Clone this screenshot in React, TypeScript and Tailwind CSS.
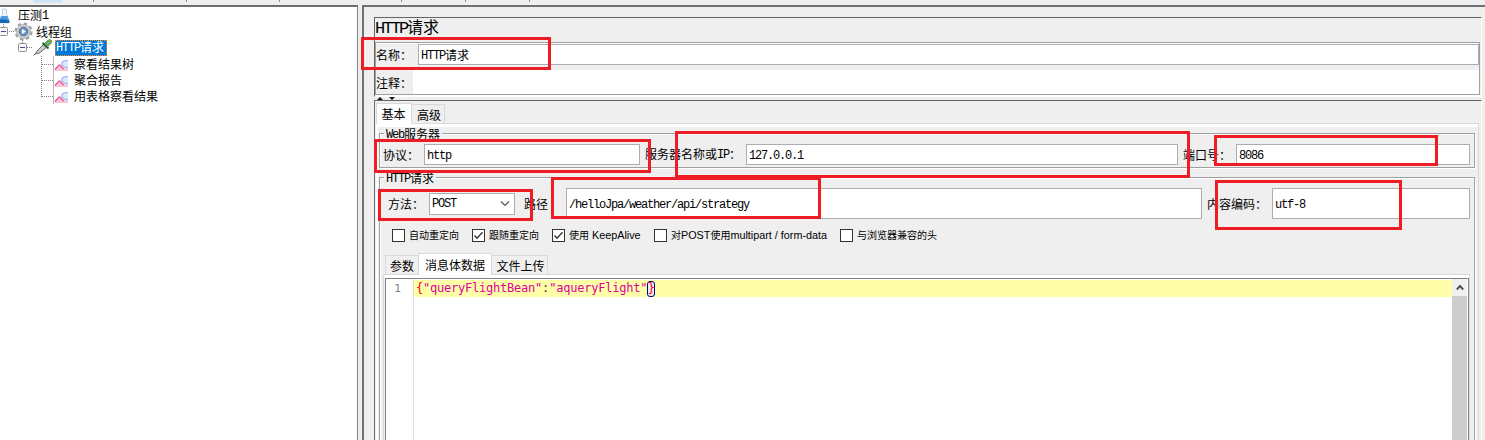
import React from "react";

const LATIN: Record<string, string> = {
  sm: "relative top-[-1px] font-['Liberation_Mono',monospace] text-[12px] tracking-[-1.2px]",
  lg: "font-['Liberation_Mono',monospace] text-[17px] tracking-[-2.2px]",
  ui: "font-['Liberation_Sans',sans-serif] text-[10.8px]",
};

function Mixed({ text, size = "sm" }: { text: string; size?: "sm" | "lg" | "ui" }) {
  const parts = text.match(/[\x20-\x7e]+|[^\x20-\x7e]+/g) ?? [];
  return (
    <span className="whitespace-pre">
      {parts.map((p, i) =>
        /^[\x20-\x7e]/.test(p) ? (
          <span key={i} className={LATIN[size]}>{p}</span>
        ) : (
          <span key={i}>{p}</span>
        )
      )}
    </span>
  );
}

function Field({ text, className }: { text: string; className: string }) {
  return (
    <div className={`flex shrink-0 items-center border border-[#abadb3] bg-white pl-[2px] pt-[2px] ${className}`}>
      <Mixed text={text} />
    </div>
  );
}

function Check({ label, checked, className }: { label: string; checked?: boolean; className: string }) {
  return (
    <div className={`flex shrink-0 items-center ${className}`}>
      <svg width="13" height="13" viewBox="0 0 13 13" className="shrink-0">
        <rect x="0.5" y="0.5" width="12" height="12" fill="#fff" stroke="#333" />
        {checked && <path d="M2.5 6.5 5 9.2 10.5 3.2" fill="none" stroke="#333" strokeWidth="1.3" />}
      </svg>
      <span className="ml-[4px] mt-[-1px] text-[10px]"><Mixed text={label} size="ui" /></span>
    </div>
  );
}

const dots = { stroke: "#808080", strokeDasharray: "1 1", fill: "none" };

function Expander({ x, y }: { x: number; y: number }) {
  return (
    <g>
      <rect x={x + 0.5} y={y + 0.5} width="8" height="8" rx="1" fill="#f8f8f8" stroke="#919191" />
      <path d={`M${x + 2} ${y + 4.5}h5`} stroke="#3c4fa0" />
    </g>
  );
}

function ChartRow({ label, last }: { label: string; last?: boolean }) {
  return (
    <div className="flex h-[16px] items-center">
      <svg width="74" height="16" className="shrink-0 overflow-visible">
        <path d={last ? "M41.5 0V9" : "M41.5 0V16"} {...dots} />
        <path d="M42 8.5H53" {...dots} />
        <path d="M53.5 0V16" stroke="#b9b9bd" />
        <path d="M55 13.5 59.500 9 63 13 68 12V15H55Z" fill="#fbc3d8" />
        <path d="M61.800 8Q61.800 4.500 68 4.500V12Q62 12.500 61.800 8Z" fill="#dbeafd" />
        <path d="M68 4.500Q61.800 4.500 61.800 8Q62 11 68 12" stroke="#8fa9ee" fill="none" strokeWidth="1.100" />
        <path d="M54.800 13.500 59.500 8.800 64 13.200" stroke="#e3568f" fill="none" strokeWidth="1.300" />
      </svg>
      <span>{label}</span>
    </div>
  );
}

function Tree() {
  return (
    <div className="flex h-full w-[358px] shrink-0 flex-col border-r border-t-2 border-r-[#848488] border-t-[#6c6d71] bg-white pt-[1px]">
      <div className="flex h-[16px] items-center">
        <svg width="18" height="16" className="shrink-0 overflow-visible">
          <path d="M2.500 1H6.500V6L9.800 13.500Q9.800 15 8.500 15H-1V11L2.500 6Z" fill="#eef3f8" stroke="#b9c6d2" strokeWidth="0.700" />
          <path d="M1.500 8H7.500L9.600 13.500Q9.600 15 8 15H-1V12Z" fill="#4b9be0" />
          <path d="M0 11.500Q4 10.500 9 12.500L9 15H0Z" fill="#1667b8" />
        </svg>
        <Mixed text="压测1" />
      </div>
      <div className="flex h-[16px] items-center">
        <svg width="36" height="16" className="shrink-0 overflow-visible">
          <path d="M3.500 0V3" {...dots} />
          <path d="M9 7.500H14" {...dots} />
          <Expander x={-1} y={3} />
          <circle cx="23.500" cy="7.500" r="7.700" fill="none" stroke="#a2a5a9" strokeWidth="2.600" strokeDasharray="3.500 2.548" />
          <circle cx="23.500" cy="7.500" r="6.900" fill="#d2d4d7" stroke="#a0a3a7" strokeWidth="0.800" />
          <circle cx="23.500" cy="7.500" r="4.300" fill="#6d97c8" stroke="#4a6387" />
          <path d="M22 5V10L26 7.500Z" fill="#fff" />
        </svg>
        <span>线程组</span>
      </div>
      <div className="flex h-[16px] items-center">
        <svg width="55" height="16" className="shrink-0 overflow-visible">
          <path d="M22.500 0V3M27 7.500H33" {...dots} />
          <Expander x={18} y={3} />
          <path d="M35.500 14 37 11 44.500 3.500 47.500 6.500 39.500 13Z" fill="#c6cccc" stroke="#6b7173" />
          <path d="M33.500 15.500 36 13" stroke="#555" />
          <path d="M42.500 3 48.500 8.500" stroke="#2f5a35" strokeWidth="2" />
          <path d="M44.500 3.500 47.500 0.500Q49.800-1 51.300 0Q52.500 2 50.500 4L47.500 6.500Z" fill="#6cae5e" stroke="#4b8e49" strokeWidth="0.800" />
        </svg>
        <div className="flex h-[16px] w-[52px] items-center border border-dotted border-[#ff8a28] bg-[#0078d7] text-white">
          <Mixed text="HTTP请求" />
        </div>
      </div>
      <ChartRow label="察看结果树" />
      <ChartRow label="聚合报告" />
      <ChartRow label="用表格察看结果" last />
    </div>
  );
}

function Group({ title, className, children }: { title: string; className: string; children: React.ReactNode }) {
  return (
    <div className={`ml-[1px] flex w-[1096px] shrink-0 flex-col border border-[#a0a0a0] shadow-[1px_1px_0_#fff,inset_1px_1px_0_#fff] ${className}`}>
      <div className="ml-[4px] mt-[-6px] flex h-[13px] w-fit shrink-0 items-center bg-[#efefef] px-[2px] pt-[1px]">
        <Mixed text={title} />
      </div>
      {children}
    </div>
  );
}

function Editor() {
  return (
    <div className="ml-[2px] mt-[3px] flex h-[164px] w-[1084px] shrink-0 border border-[#7f818c] bg-white font-['DejaVu_Sans_Mono',monospace] text-[12px] tracking-[-0.22px]">
      <div className="flex w-[28px] shrink-0 justify-center border-r border-[#dddddd] pt-[2px]">
        <span className="h-[16px] pr-[4px] text-[11px] leading-[16px] text-[#808080]">1</span>
      </div>
      <div className="w-[1038px] shrink-0 pt-[1px]">
        <div className="flex h-[17px] items-center bg-[#ffffaa] pl-[2px] leading-[15px]">
          <span className="text-[#ff0000]">{"{"}</span>
          <span className="text-[#dc009c]">"queryFlightBean"</span>
          <span className="text-[#333]">:</span>
          <span className="text-[#dc009c]">"aqueryFlight"</span>
          <span className="flex h-[16px] w-[8px] items-center justify-center rounded-[3px] border border-[#000080] bg-[#eaeaff] text-[#ff0000]">{"}"}</span>
        </div>
      </div>
      <div className="flex w-[15px] shrink-0 flex-col bg-[#cdcdcd]">
        <div className="flex h-[17px] items-center justify-center bg-[#f0f0f0]">
          <svg width="8" height="7"><path d="M0.800 5.500 4 2 7.200 5.500" fill="none" stroke="#505050" strokeWidth="1.900" /></svg>
        </div>
      </div>
    </div>
  );
}

function RequestPanel() {
  return (
    <div className="ml-[4px] flex h-full w-[1123px] shrink-0 flex-col border-l-2 border-t-2 border-[#6f7075] pl-[10px] pt-[10px]">
      <div className="flex h-[80px] w-[1108px] shrink-0 flex-col border-b border-l border-r border-t border-b-white border-l-[#646464] border-r-white border-t-[#646464]">
        <div className="flex h-[24px] shrink-0 items-center text-[16px] leading-[20px]">
          <span className="mt-[-5px]"><Mixed text="HTTP请求" size="lg" /></span>
        </div>
        <div className="flex h-[53px] w-[1105px] shrink-0 flex-col border border-[#a0a0a0]">
          <div className="h-[1px] shrink-0 bg-white" />
          <div className="flex h-[21px] shrink-0 items-center">
            <span className="w-[42px] shrink-0 whitespace-nowrap">名称：</span>
            <Field text="HTTP请求" className="h-[21px] w-[1061px]" />
          </div>
          <div className="mt-[5px] flex h-[24px] shrink-0 items-center">
            <span className="w-[37px] shrink-0 whitespace-nowrap pt-[2px]">注释：</span>
            <div className="h-full grow bg-white" />
          </div>
        </div>
        <div className="h-[1px] bg-white" />
      </div>
      <svg width="40" height="3" className="shrink-0">
        <path d="M3 3 6 0 9 3ZM15 0H21L18 3Z" fill="#111" />
      </svg>
      <div className="flex h-[340px] w-[1108px] shrink-0 flex-col border-l border-r border-t border-l-[#707074] border-r-white border-t-[#646464] pl-[1px] pt-[2px]">
        <div className="z-10 mb-[-1px] flex h-[21px] shrink-0 items-end">
          <div className="flex h-[21px] w-[36px] items-center justify-center border border-b-0 border-[#d9d9d9] bg-white pr-[1px]">基本</div>
          <div className="flex h-[20px] w-[33px] items-center justify-center border border-l-0 border-[#d9d9d9] pl-[2px] pt-[1px]">高级</div>
        </div>
        <div className="flex h-[317px] w-[1103px] shrink-0 flex-col border-l-2 border-r border-t border-l-white border-r-[#d9d9d9] border-t-[#d9d9d9]">
          <div className="h-[3px] shrink-0 bg-white" />
          <Group title="Web服务器" className="mt-[6px] h-[35px]">
            <div className="mt-[3px] flex h-[21px] shrink-0 items-center">
              <span className="w-[44px] shrink-0 whitespace-nowrap pl-[3px]">协议：</span>
              <Field text="http" className="h-[21px] w-[216px]" />
              <span className="w-[106px] shrink-0 pl-[5px]"><Mixed text="服务器名称或IP：" /></span>
              <Field text="127.0.0.1" className="h-[21px] w-[432px]" />
              <span className="w-[58px] shrink-0 whitespace-nowrap pl-[5px]">端口号：</span>
              <Field text="8086" className="h-[21px] w-[234px]" />
            </div>
          </Group>
          <Group title="HTTP请求" className="mt-[9px] h-[300px]">
            <div className="mt-[3px] flex h-[31px] shrink-0 items-center">
              <span className="w-[49px] shrink-0 whitespace-nowrap pl-[8px]">方法：</span>
              <div className="flex h-[22px] w-[86px] shrink-0 items-center justify-between border border-[#abadb3] bg-white pl-[2px] pr-[4px] pt-[1px]">
                <Mixed text="POST" />
                <svg width="10" height="6"><path d="M1 0.500 5 4.500 9 0.500" fill="none" stroke="#555" strokeWidth="1.200" /></svg>
              </div>
              <span className="w-[51px] shrink-0 pl-[9px]">路径</span>
              <Field text="/helloJpa/weather/api/strategy" className="h-[31px] w-[636px]" />
              <span className="w-[70px] shrink-0 whitespace-nowrap pl-[5px]">内容编码：</span>
              <Field text="utf-8" className="h-[31px] w-[198px]" />
            </div>
            <div className="ml-[12px] mt-[10px] flex h-[13px] shrink-0 items-center">
              <Check label="自动重定向" className="w-[80px]" />
              <Check label="跟随重定向" checked className="w-[80px]" />
              <Check label="使用 KeepAlive" checked className="w-[102px]" />
              <Check label="对POST使用multipart / form-data" className="w-[186px]" />
              <Check label="与浏览器兼容的头" className="w-[110px]" />
            </div>
            <div className="ml-[3px] mt-[11px] flex w-[1087px] shrink-0 flex-col">
              <div className="z-10 mb-[-1px] flex h-[22px] shrink-0 items-end pl-[2px]">
                <div className="flex h-[20px] w-[33px] items-center justify-center border border-r-0 border-[#d9d9d9] pt-[1px]">参数</div>
                <div className="flex h-[22px] w-[74px] items-center justify-center border border-b-0 border-[#d9d9d9] bg-white">消息体数据</div>
                <div className="flex h-[20px] w-[56px] items-center justify-center border border-l-0 border-[#d9d9d9] pl-[2px] pt-[1px]">文件上传</div>
              </div>
              <div className="border border-b-0 border-[#d9d9d9] bg-[linear-gradient(#fff,#fff)] bg-[length:100%_4px] bg-no-repeat">
                <div className="ml-[-1px]"><Editor /></div>
              </div>
            </div>
          </Group>
        </div>
      </div>
    </div>
  );
}

const MARKS = [
  "left-[361px] top-[37px] w-[190px] h-[33px]",
  "left-[374px] top-[139px] w-[277px] h-[34px]",
  "left-[675px] top-[131px] w-[515px] h-[47px]",
  "left-[1214px] top-[135px] w-[224px] h-[31px]",
  "left-[378px] top-[189px] w-[155px] h-[32px]",
  "left-[551px] top-[177px] w-[270px] h-[42px]",
  "left-[1215px] top-[180px] w-[187px] h-[50px]",
];

export default function App() {
  return (
    <div className="relative flex h-[440px] w-[1485px] flex-col overflow-hidden bg-[#efefef] font-['Noto_Sans_CJK_SC',sans-serif] text-[12px] leading-[16px] text-black">
      <div className="flex h-[5px] shrink-0">
        <div className="ml-[33px] h-[3px] w-[29px] bg-[#cfe4f5]" />
        <div className="ml-[31px] h-[2px] w-[1px] bg-[#888]" />
        <div className="ml-[92px] h-[2px] w-[1px] bg-[#888]" />
        <div className="ml-[92px] h-[2px] w-[1px] bg-[#888]" />
        <div className="ml-[121px] h-[2px] w-[1px] bg-[#888]" />
        <div className="ml-[63px] h-[2px] w-[1px] bg-[#888]" />
        <div className="ml-[63px] h-[2px] w-[1px] bg-[#888]" />
      </div>
      <div className="flex h-[435px] shrink-0">
        <Tree />
        <RequestPanel />
      </div>
      {MARKS.map((m) => (
        <div key={m} className={`pointer-events-none absolute z-20 border-[3px] border-[#ee1c24] ${m}`} />
      ))}
    </div>
  );
}
